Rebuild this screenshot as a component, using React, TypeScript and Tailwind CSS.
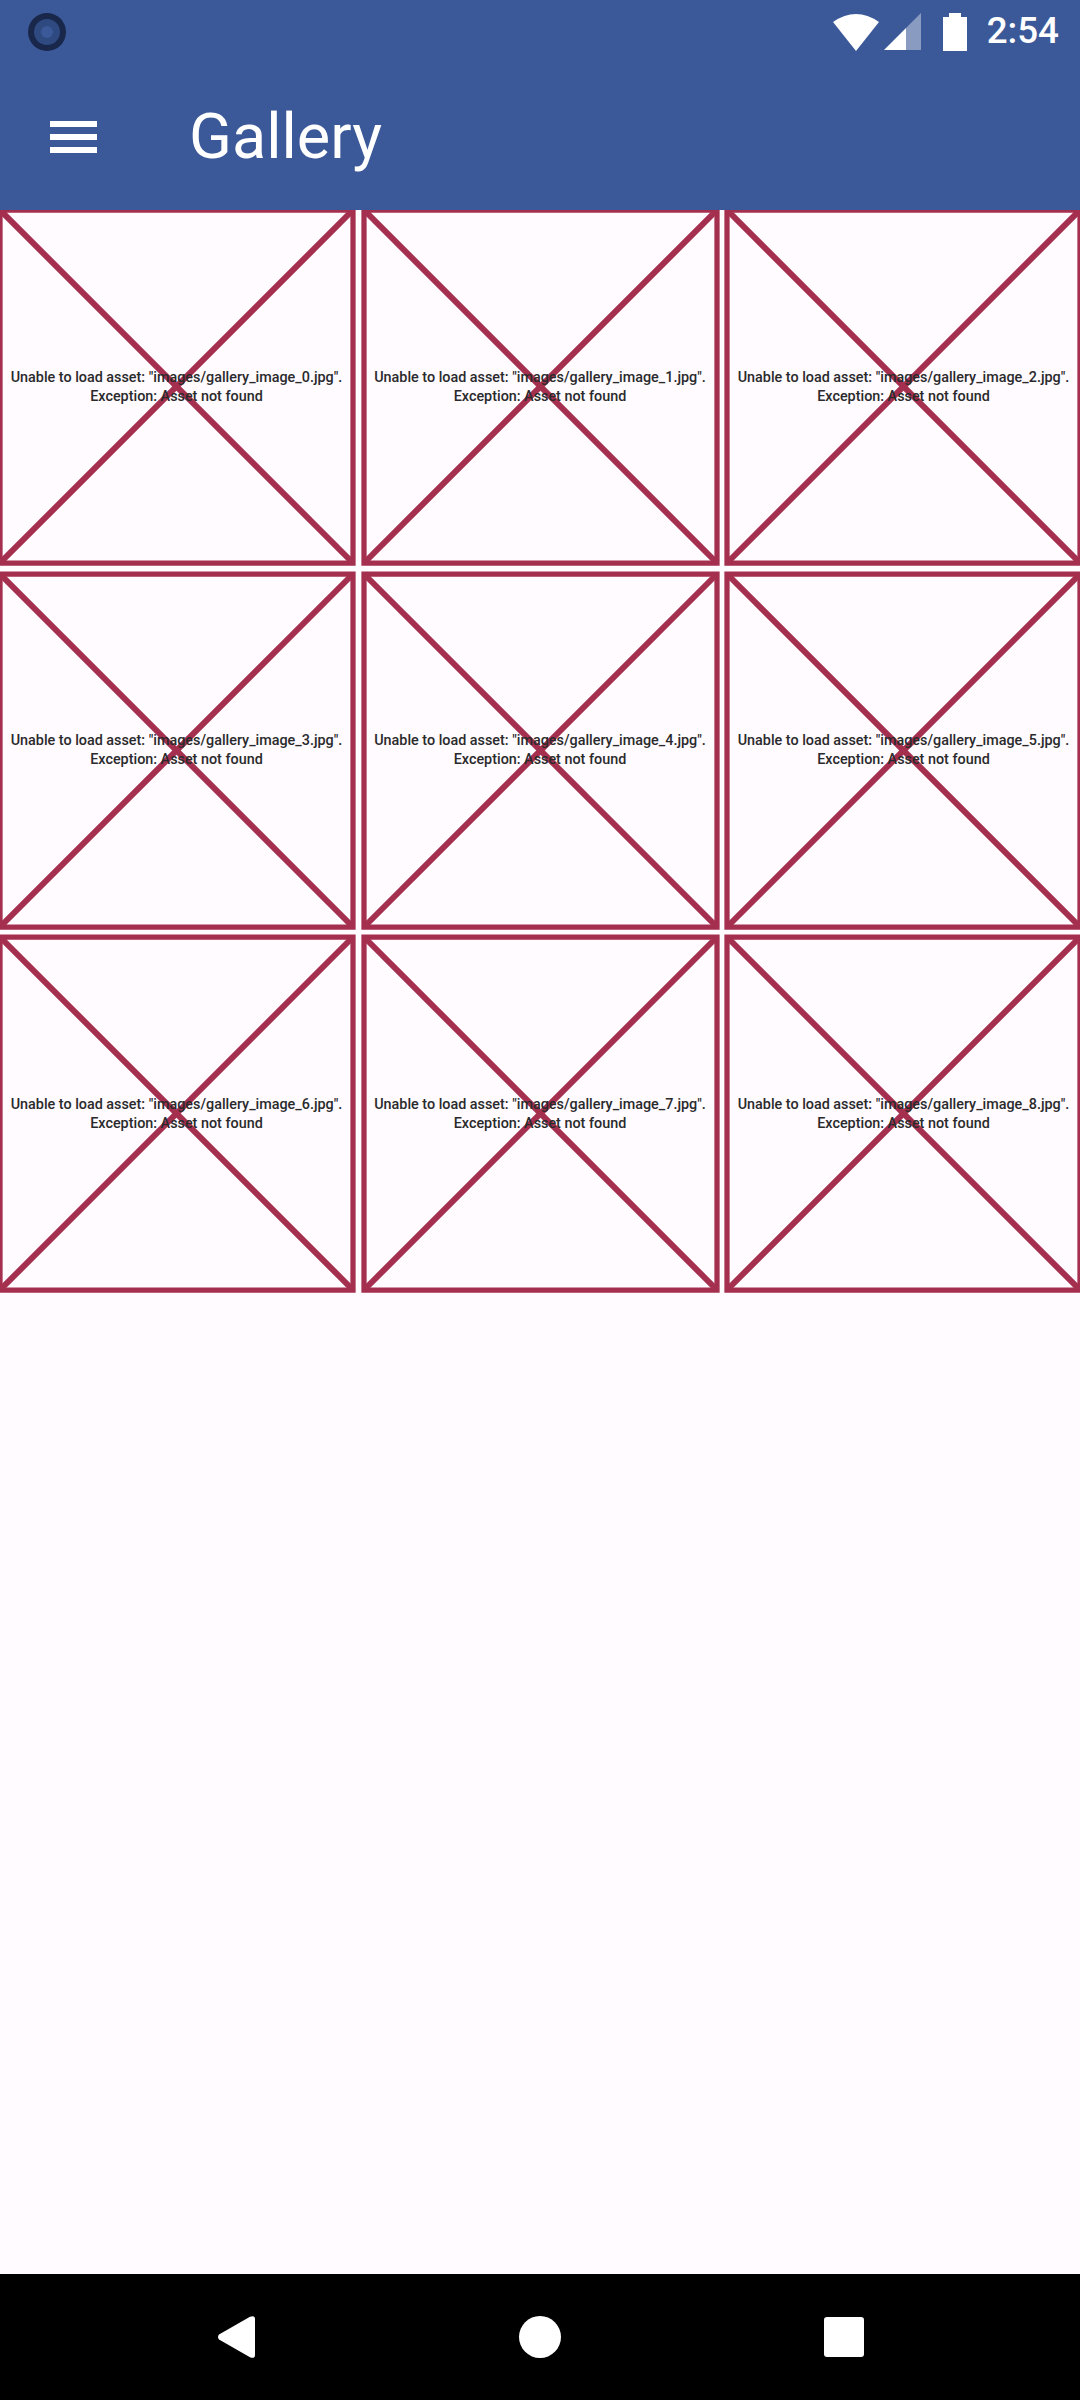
const images = [0, 1, 2, 3, 4, 5, 6, 7, 8];

const GalleryPlaceholder = ({ index }: { index: number }) => (
  <div className="relative aspect-square">
    <svg className="absolute inset-0 w-full h-full overflow-visible" viewBox="0 0 100 100" preserveAspectRatio="none">
      <rect x="0" y="0" width="100" height="100" fill="none" stroke="#a52f4e" strokeWidth="5.25" vectorEffect="non-scaling-stroke" />
      <line x1="0" y1="0" x2="100" y2="100" stroke="#a52f4e" strokeWidth="6" vectorEffect="non-scaling-stroke" />
      <line x1="100" y1="0" x2="0" y2="100" stroke="#a52f4e" strokeWidth="6" vectorEffect="non-scaling-stroke" />
    </svg>
    <div className="relative h-full flex items-center justify-center text-center text-[#2a2a2c] text-[14.36px] font-medium leading-[19px] whitespace-nowrap">
      <p>
        Unable to load asset: "images/gallery_image_{index}.jpg".
        <br />
        Exception: Asset not found
      </p>
    </div>
  </div>
);

export default function App() {
  return (
    <div className="h-[2400px] flex flex-col bg-[#fffbfe] font-['Roboto',sans-serif] overflow-hidden">
      {/* Status bar */}
      <div className="h-[63px] shrink-0 bg-[#3b5998] flex items-center justify-between pl-[28px] pr-[21px]">
        <div className="w-[38px] h-[38px] rounded-full bg-[#18274a] flex items-center justify-center">
          <div className="w-[26px] h-[26px] rounded-full bg-[#2f4a80] flex items-center justify-center">
            <div className="w-[12px] h-[12px] rounded-full bg-[#3b5998]" />
          </div>
        </div>
        <div className="flex items-center text-white">
          <svg width="46" height="38" viewBox="0 0 46 38" className="mr-[5px]">
            <path d="M0 9 Q23 -7 46 9 L23 38 Z" fill="#fff" />
          </svg>
          <svg width="37" height="38" viewBox="0 0 37 38" className="mr-[22px]">
            <path d="M0 37 L22 15 L22 37 Z" fill="#fff" />
            <path d="M22 15 L37 0 L37 37 L22 37 Z" fill="#fff" fillOpacity="0.4" />
          </svg>
          <svg width="24" height="38" viewBox="0 0 24 38" className="mr-[20px]">
            <path d="M6 0 H18 V4 H24 V38 H0 V4 H6 Z" fill="#fff" />
          </svg>
          <span className="text-[36.75px] leading-none font-medium">2:54</span>
        </div>
      </div>

      {/* App bar */}
      <div className="h-[147px] shrink-0 bg-[#3b5998] flex items-center text-white">
        <div className="w-[50px]" />
        <div className="w-[47px] flex flex-col gap-[7px]">
          <div className="h-[6px] bg-white" />
          <div className="h-[6px] bg-white" />
          <div className="h-[6px] bg-white" />
        </div>
        <h1 className="ml-[92px] text-[63px] leading-none">Gallery</h1>
      </div>

      {/* Grid */}
      <div className="flex-1 grid grid-cols-3 gap-[10.5px] content-start overflow-hidden">
        {images.map((i) => (
          <GalleryPlaceholder key={i} index={i} />
        ))}
      </div>

      {/* Nav bar */}
      <div className="h-[126px] shrink-0 bg-black flex items-center justify-center">
        <div className="w-[304px] flex justify-center">
          <svg width="37" height="42" viewBox="0 0 37 42">
            <path d="M1 18.5 L32 0.7 Q37 -1 37 3 L37 39 Q37 43 32 41.3 L1 23.5 Q-1 21 1 18.5 Z" fill="#fff" />
          </svg>
        </div>
        <div className="w-[304px] flex justify-center">
          <div className="w-[42px] h-[42px] rounded-full bg-white" />
        </div>
        <div className="w-[304px] flex justify-center">
          <div className="w-[40px] h-[40px] rounded-[3px] bg-white" />
        </div>
      </div>
    </div>
  );
}
